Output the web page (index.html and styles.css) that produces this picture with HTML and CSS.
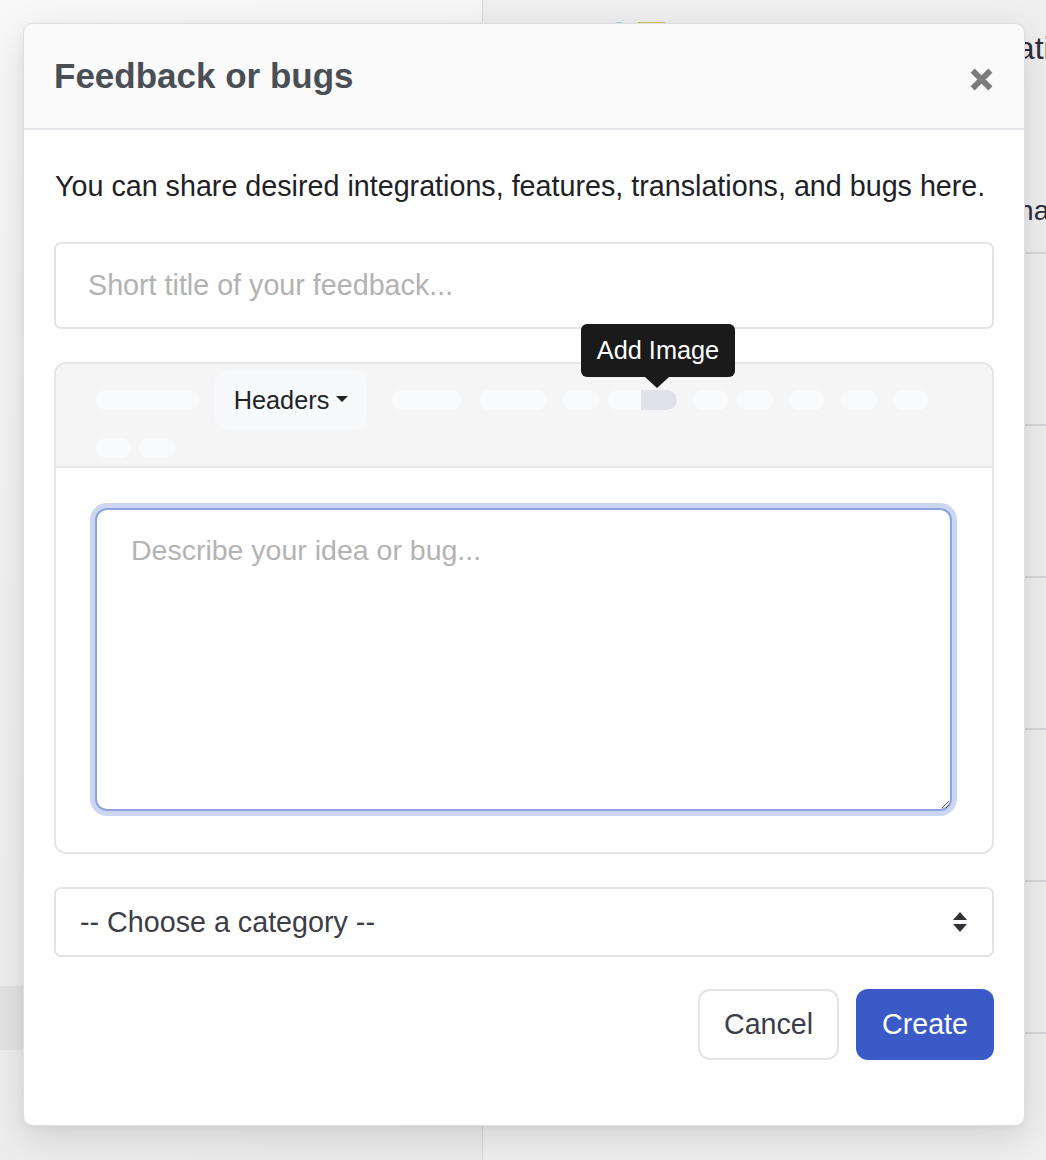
FILE: index.html
```html
<!DOCTYPE html>
<html lang="en">
<head>
<meta charset="utf-8">
<title>Feedback or bugs</title>
<link rel="stylesheet" href="styles.css">
</head>
<body>
<div class="app">
  <aside class="sidebar">
    <div class="sidebar-spacer"></div>
    <div class="sidebar-item"></div>
  </aside>
  <main class="main">
    <div class="brand">
      <span class="brand-dot"></span>
      <span class="brand-square"></span>
    </div>
    <h1 class="main-title">Integrations</h1>
    <div class="main-sub">Username</div>
    <ul class="rows">
      <li class="row-first"></li><li></li><li></li><li></li><li></li><li></li>
    </ul>
  </main>
</div>

<div class="modal" role="dialog" aria-labelledby="modal-title">
  <header class="modal-header">
    <h2 id="modal-title" class="modal-title">Feedback or bugs</h2>
    <button class="close" type="button" aria-label="Close">
      <svg viewBox="0 0 24 24" width="25" height="25" aria-hidden="true">
        <path d="M3.5 3.5 L20.5 20.5 M20.5 3.5 L3.5 20.5" stroke="currentColor" stroke-width="5.5" stroke-linecap="butt"/>
      </svg>
    </button>
  </header>

  <div class="modal-body">
    <p class="intro">You can share desired integrations, features, translations, and bugs here.</p>

    <input class="field title-input" type="text" placeholder="Short title of your feedback...">

    <div class="editor">
      <div class="toolbar">
        <span class="pill w104 mr16"></span>
        <span class="headers mr24">Headers <span class="caret"></span></span>
        <span class="pill w70 mr18"></span>
        <span class="pill w68 mr16"></span>
        <span class="pill w36 mr8"></span>
        <span class="pill w34 pill-left"></span>
        <span class="pill-hover mr16">
          <span class="tooltip">Add Image</span>
        </span>
        <span class="pill w36 mr8"></span>
        <span class="pill w36 mr16"></span>
        <span class="pill w36 mr16"></span>
        <span class="pill w36 mr16"></span>
        <span class="pill w36"></span>
        <span class="break"></span>
        <span class="pill w36 mr8"></span>
        <span class="pill w36"></span>
      </div>
      <div class="editor-content">
        <textarea class="description" placeholder="Describe your idea or bug..."></textarea>
      </div>
    </div>

    <div class="select">
      <span class="select-label">-- Choose a category --</span>
      <svg class="select-arrows" viewBox="0 0 16 22" width="16" height="22" aria-hidden="true">
        <path d="M8 1 L15 9 L1 9 Z M1 13 L15 13 L8 21 Z" fill="currentColor"/>
      </svg>
    </div>

    <div class="actions">
      <button class="btn btn-cancel" type="button">Cancel</button>
      <button class="btn btn-create" type="button">Create</button>
    </div>
  </div>
</div>
</body>
</html>
```

FILE: styles.css
```css
* {
  box-sizing: border-box;
}

html, body {
  margin: 0;
  height: 100%;
}

body {
  font-family: "Liberation Sans", Arial, Helvetica, sans-serif;
  background: #efefef;
  overflow: hidden;
  position: relative;
}

/* ---------- page behind the dialog ---------- */
.app {
  display: grid;
  grid-template-columns: 483px 1fr;
  height: 1160px;
}

.sidebar {
  background: linear-gradient(160deg, #f8f8f8 0%, #f1f1f1 45%, #ececec 100%);
  border-right: 1px solid #d6d6db;
  display: flex;
  flex-direction: column;
}

.sidebar-spacer {
  height: 986px;
}

.sidebar-item {
  height: 64px;
  background: #e3e3e3;
}

.main {
  background: #efefef;
  padding: 22px 0 0 0;
  overflow: hidden;
}

.brand {
  display: flex;
  gap: 10px;
  margin-left: 127px;
  height: 0;
}

.brand-dot {
  width: 18px;
  height: 18px;
  border-radius: 50%;
  background: #86d3d9;
}

.brand-square {
  width: 27px;
  height: 18px;
  background: #d9c45a;
}

.main-title {
  margin: 8px 0 0 452px;
  font-size: 32px;
  font-weight: 400;
  color: #2c2f3a;
  white-space: nowrap;
}

.main-sub {
  margin: 128px 0 0 476px;
  font-size: 28px;
  color: #2c2f3a;
  white-space: nowrap;
}

.rows {
  list-style: none;
  margin: 25px 0 0 0;
  padding: 0;
}

.rows li {
  height: 152px;
  border-top: 2px solid #d8d8dc;
}

.rows .row-first {
  height: 172px;
}

/* ---------- dialog ---------- */
.modal {
  position: absolute;
  top: 23px;
  left: 23px;
  width: 1002px;
  height: 1103px;
  background: #fff;
  border: 1px solid #dedee2;
  border-radius: 10px;
  box-shadow: 0 12px 40px rgba(0, 0, 0, 0.12), 0 2px 8px rgba(0, 0, 0, 0.05);
  display: flex;
  flex-direction: column;
}

.modal-header {
  height: 106px;
  background: #fafafa;
  border-bottom: 2px solid #e6e6ea;
  border-radius: 10px 10px 0 0;
  display: flex;
  align-items: center;
  justify-content: space-between;
  padding: 0 30px 0 30px;
}

.modal-title {
  margin: 0;
  font-size: 35px;
  font-weight: 700;
  color: #4a4e55;
}

.close {
  border: 0;
  background: none;
  padding: 0;
  margin-top: 6px;
  color: #7b7b7b;
  width: 25px;
  height: 25px;
  display: block;
}

.close svg {
  display: block;
}

.modal-body {
  padding: 0 30px;
  display: flex;
  flex-direction: column;
}

.intro {
  margin: 39px 0 0 1px;
  font-size: 28.7px;
  line-height: 34px;
  color: #1e2126;
  white-space: nowrap;
}

.field {
  font-family: inherit;
}

.title-input {
  margin-top: 39px;
  height: 87px;
  width: 100%;
  border: 2px solid #e4e4e8;
  border-radius: 7px;
  padding: 0 32px;
  font-size: 28.7px;
  color: #333;
  background: #fff;
  outline: none;
}

.title-input::placeholder {
  color: #b2b2b2;
}

/* rich text editor */
.editor {
  margin-top: 33px;
  border: 2px solid #e6e6ea;
  border-radius: 12px;
}

.toolbar {
  background: #f5f5f6;
  border-bottom: 2px solid #e6e6ea;
  border-radius: 10px 10px 0 0;
  padding: 7px 40px 8px 39px;
  display: flex;
  flex-wrap: wrap;
  align-items: center;
  row-gap: 0;
}

.pill {
  height: 20px;
  border-radius: 10px;
  background: #f9fafb;
}

.w104 { width: 104px; }
.w70 { width: 70px; }
.w68 { width: 68px; }
.w36 { width: 36px; }
.w34 { width: 34px; }

.mr8 { margin-right: 8px; }
.mr16 { margin-right: 16px; }
.mr18 { margin-right: 18px; }
.mr24 { margin-right: 24px; }

.pill-left {
  border-radius: 10px 0 0 10px;
}

.pill-hover {
  position: relative;
  width: 36px;
  height: 20px;
  background: #e0e2e7;
  border-radius: 0 10px 10px 0;
}

.tooltip {
  position: absolute;
  bottom: 33px;
  left: -60px;
  width: 154px;
  height: 53px;
  background: #1a1a1a;
  color: #fff;
  border-radius: 6px;
  font-size: 25.3px;
  display: flex;
  align-items: center;
  justify-content: center;
  white-space: nowrap;
}

.tooltip::after {
  content: "";
  position: absolute;
  top: 100%;
  left: 76px;
  margin-left: -12px;
  border-left: 12px solid transparent;
  border-right: 12px solid transparent;
  border-top: 11px solid #1a1a1a;
}

.headers {
  width: 152px;
  height: 58px;
  border-radius: 12px;
  background: #f8f9fb;
  display: flex;
  align-items: center;
  justify-content: center;
  gap: 7px;
  font-size: 25.3px;
  color: #1f2227;
}

.caret {
  width: 0;
  height: 0;
  border-left: 6px solid transparent;
  border-right: 6px solid transparent;
  border-top: 6px solid #1f2227;
  margin-top: -2px;
}

.break {
  flex-basis: 100%;
  height: 9px;
}

.editor-content {
  padding: 40px 39px 41px 39px;
}

.description {
  display: block;
  width: 857px;
  height: 303px;
  border: 2px solid #8ea4e2;
  border-radius: 12px;
  box-shadow: 0 0 0 5px #ccd6f2;
  padding: 24px 34px;
  font-family: inherit;
  font-size: 28.5px;
  color: #333;
  resize: vertical;
  outline: none;
}

.description::placeholder {
  color: #b3b3b3;
}

/* category select */
.select {
  margin-top: 33px;
  height: 70px;
  border: 2px solid #e4e4e8;
  border-radius: 7px;
  display: flex;
  align-items: center;
  justify-content: space-between;
  padding: 0 24px 0 24px;
}

.select-label {
  font-size: 28.7px;
  color: #3b3e46;
}

.select-arrows {
  color: #2f3338;
}

.actions {
  margin-top: 32px;
  display: flex;
  justify-content: flex-end;
  gap: 17px;
}

.btn {
  height: 71px;
  border-radius: 12px;
  font-family: inherit;
  font-size: 28.6px;
  padding: 0;
}

.btn-cancel {
  width: 141px;
  background: #fff;
  color: #3a3d4a;
  border: 2px solid #e4e4e8;
}

.btn-create {
  width: 138px;
  background: #3a5bc7;
  color: #fff;
  border: 0;
}
```
